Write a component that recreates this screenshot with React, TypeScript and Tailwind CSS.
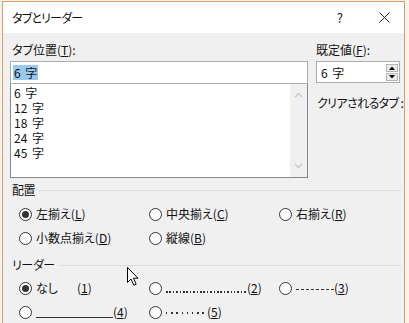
import React from "react"

function Radio({ checked = false }: { checked?: boolean }) {
  return (
    <span className="w-[13px] h-[13px] shrink-0 rounded-full border border-[#333333] bg-white flex items-center justify-center">
      {checked && <span className="w-[7px] h-[7px] rounded-full bg-[#333333]" />}
    </span>
  )
}

function Option({
  checked,
  children,
}: {
  checked?: boolean
  children: React.ReactNode
}) {
  return (
    <div className="flex items-center h-[24px]">
      <Radio checked={checked} />
      <span className="ml-[4px] whitespace-nowrap flex items-center">{children}</span>
    </div>
  )
}

function Section({ title, lineGap }: { title: string; lineGap: string }) {
  return (
    <div className="flex items-center h-[16px] pl-[2px]">
      <span className="leading-[16px] tracking-[-0.4px]">{title}</span>
      <div className={`flex-1 h-px bg-[#dcdcdc] ${lineGap}`} />
    </div>
  )
}

function Chevron({ up }: { up?: boolean }) {
  return (
    <svg width="9" height="6" viewBox="0 0 9 6">
      <path
        d={up ? "M1 5 L4.5 1.5 L8 5" : "M1 1 L4.5 4.5 L8 1"}
        fill="none"
        stroke="#c2c2c2"
        strokeWidth="1.2"
      />
    </svg>
  )
}

export default function App() {
  const items = ["6 字", "12 字", "18 字", "24 字", "45 字"]

  return (
    <div className="w-[409px] h-[323px] overflow-hidden bg-[#f4f4f4] pt-px pl-[2px] relative text-[12px] text-[#111] font-['Noto_Sans_CJK_JP',sans-serif] [font-feature-settings:'palt']">
      <div className="w-[403px] h-[340px] border-x border-t border-[#e39b5b] flex flex-col">
        {/* title bar */}
        <div className="h-[31px] bg-white flex items-center pl-[9px] shrink-0">
          <span className="leading-[16px] tracking-[-0.8px]">タブとリーダー</span>
          <span className="ml-auto mr-[21px] text-[13px]">?</span>
          <div className="w-[40px] flex items-center justify-center">
            <svg width="11" height="11" viewBox="0 0 11 11">
              <path d="M0.5 0.5 L10.5 10.5 M10.5 0.5 L0.5 10.5" stroke="#222" strokeWidth="1" />
            </svg>
          </div>
        </div>

        <div className="flex-1 bg-[#f0f0f0] pt-[9px] pl-[7px] pr-[3px]">
          <div className="flex">
            {/* left column */}
            <div className="w-[298px]">
              <div className="h-[16px] leading-[16px] pl-[2px]">
                タブ位置(<u>T</u>):
              </div>
              <div className="mt-[3px] h-[23px] border border-[#abadb3] bg-white flex items-center pl-[2px]">
                <span className="bg-[#99c9ef] px-px leading-[15px] [word-spacing:2px]">6 字</span>
              </div>
              <div className="h-[94px] border border-t-0 border-[#828790] bg-white flex">
                <div className="flex-1 pl-[3px] pt-px [word-spacing:2px]">
                  {items.map((t) => (
                    <div key={t} className="h-[15px] leading-[15px]">
                      {t}
                    </div>
                  ))}
                </div>
                <div className="w-[17px] bg-[#f0f0f0] flex flex-col items-center justify-between py-[8px]">
                  <Chevron up />
                  <Chevron />
                </div>
              </div>
            </div>

            {/* right column */}
            <div className="ml-[8px] w-[84px]">
              <div className="h-[16px] leading-[16px]">
                既定値(<u>F</u>):
              </div>
              <div className="mt-[3px] h-[22px] border border-[#abadb3] bg-white flex items-center pl-[4px] pr-px">
                <span className="leading-[15px] [word-spacing:2px]">6 字</span>
                <div className="ml-auto flex flex-col gap-px">
                  <div className="w-[12px] h-[8px] bg-[#ececec] border border-[#b5b5b5] flex items-center justify-center">
                    <svg width="6" height="4" viewBox="0 0 6 4">
                      <path d="M0 4 L3 0.5 L6 4 Z" fill="#000" />
                    </svg>
                  </div>
                  <div className="w-[12px] h-[8px] bg-[#ececec] border border-[#b5b5b5] flex items-center justify-center">
                    <svg width="6" height="4" viewBox="0 0 6 4">
                      <path d="M0 0 L3 3.5 L6 0 Z" fill="#000" />
                    </svg>
                  </div>
                </div>
              </div>
              <div className="mt-[12px] h-[16px] leading-[16px] pl-px whitespace-nowrap tracking-[-0.6px]">
                クリアされるタブ :
              </div>
            </div>
          </div>

          {/* alignment */}
          <div className="mt-[4px]">
            <Section title="配置" lineGap="ml-[3px]" />
          </div>
          <div className="mt-[4px] pl-[9px] grid grid-cols-[130px_130px_130px]">
            <Option checked>
              左揃え(<u>L</u>)
            </Option>
            <Option>
              中央揃え(<u>C</u>)
            </Option>
            <Option>
              右揃え(<u>R</u>)
            </Option>
            <Option>
              小数点揃え(<u>D</u>)
            </Option>
            <Option>
              縦線(<u>B</u>)
            </Option>
          </div>

          {/* leader */}
          <div className="mt-[7px]">
            <Section title="リーダー" lineGap="ml-[4px]" />
          </div>
          <div className="mt-[3px] pl-[9px] grid grid-cols-[130px_130px_130px]">
            <Option checked>
              なし<span className="ml-[19px]">(<u>1</u>)</span>
            </Option>
            <Option>
              <span className="w-[81px] h-[2px] self-end mb-[4px] bg-[repeating-linear-gradient(90deg,#333_0_1.5px,transparent_1.5px_3.4px)]" />
              <span>
                (<u>2</u>)
              </span>
            </Option>
            <Option>
              <span className="w-[38px] h-px mt-[2px] bg-[repeating-linear-gradient(90deg,#333_0_3px,transparent_3px_5px)]" />
              <span>
                (<u>3</u>)
              </span>
            </Option>
            <Option>
              <span className="w-[77px] h-px self-end mb-[3px] bg-[#333]" />
              <span>
                (<u>4</u>)
              </span>
            </Option>
            <Option>
              <span className="w-[41px] h-[2px] mt-[2px] bg-[repeating-linear-gradient(90deg,#333_0_1.5px,transparent_1.5px_5.2px)]" />
              <span>
                (<u>5</u>)
              </span>
            </Option>
          </div>
        </div>
      </div>

      {/* mouse cursor */}
      <svg
        className="absolute left-[126px] top-[266px]"
        width="14"
        height="21"
        viewBox="0 0 14 21"
      >
        <path
          d="M1.5 1.5 L1.5 16.5 L5 13 L7.8 19.2 L10.2 18.2 L7.5 12.2 L12 12.2 Z"
          fill="#fff"
          stroke="#000"
          strokeWidth="1"
          strokeLinejoin="round"
        />
      </svg>
    </div>
  )
}
